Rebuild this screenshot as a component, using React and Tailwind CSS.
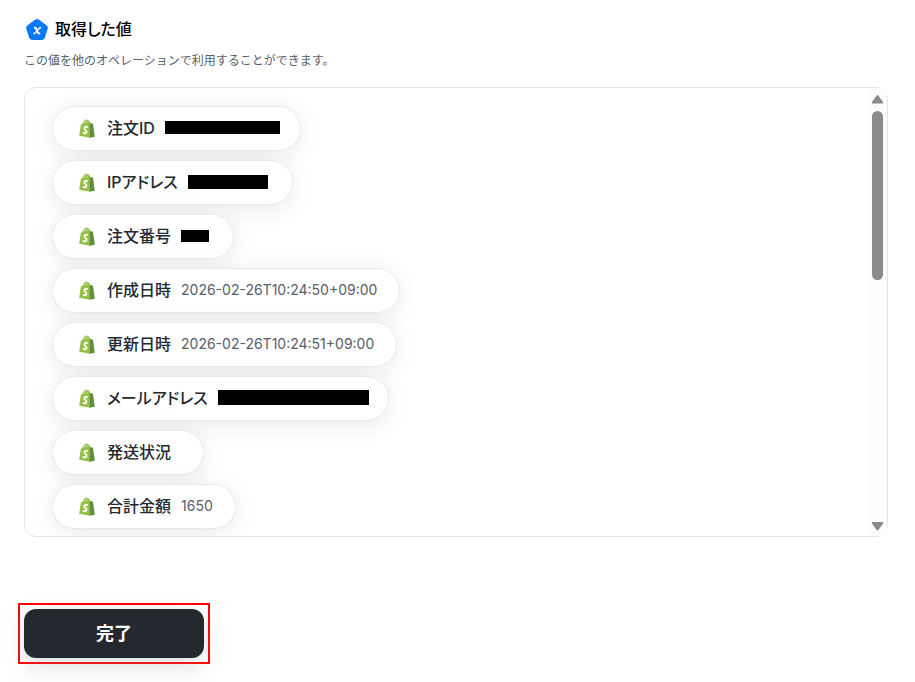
const items = [
  { label: "注文ID", mask: "w-[115px] h-[13px]", box: "w-[113px]" },
  { label: "IPアドレス", mask: "w-20 h-[14px]", box: "w-[82px]" },
  { label: "注文番号", mask: "w-7 h-3", box: "w-[30px]" },
  { label: "作成日時", value: "2026-02-26T10:24:50+09:00" },
  { label: "更新日時", value: "2026-02-26T10:24:51+09:00" },
  { label: "メールアドレス", mask: "w-[151px] h-[15px]", box: "w-[148px]" },
  { label: "発送状況", value: "" },
  { label: "合計金額", value: "1650" },
];

function VariableIcon() {
  return (
    <svg width="24" height="24" viewBox="0 0 24 24" aria-hidden="true">
      <path
        d="M10.2 1.6a3 3 0 0 1 3.6 0l7.9 5.9a3 3 0 0 1 1 3.3l-2.9 9a3 3 0 0 1-2.8 2.1H7a3 3 0 0 1-2.8-2.1l-2.9-9a3 3 0 0 1 1-3.300z"
        fill="#0a78f5"
      />
      <path
        d="M9 9.800h1.200c.4 0 .6.1.8.5l2 4.600c.2.400.4.600.8.600h1.400"
        fill="none"
        stroke="#fff"
        strokeWidth="2"
      />
      <path
        d="M16 9.700h-.6c-.5 0-.8.200-1.100.500l-4.200 4.800c-.3.300-.6.500-1.100.5h-.7"
        fill="none"
        stroke="#fff"
        strokeWidth="1.500"
      />
    </svg>
  );
}

function ShopifyIcon() {
  return (
    <svg width="16" height="19" viewBox="0 0 16 19" className="shrink-0" aria-hidden="true">
      <path
        d="M3.600 5.400C4.100 3 5.700 1 7.300.9c1.300 0 1.900 1.600 1.900 3.500M6.100 4.700c.4-2 1.700-3.400 2.800-3.400.9 0 1.500 1.100 1.700 2.700"
        fill="#b9d68a"
        stroke="#95bf47"
        strokeWidth="0.8"
      />
      <path d="M1.900 5.500 10.800 3.200v15.600L.2 16.800z" fill="#95bf47" />
      <path d="M10.600 3.200l1.500 1.200 1.600.2c.2 0 .3.200.3.300l1.800 12.800-5.200 1.100z" fill="#5e8e3e" />
      <path
        d="M8.800 8.200c-1.600-.8-3.400-.5-3.500.9-.1 1.600 2.500 2 2.300 3.800-.2 1.700-2.200 1.800-3.700.7"
        fill="none"
        stroke="#fff"
        strokeWidth="1.800"
      />
    </svg>
  );
}

function Chip({ item }) {
  return (
    <li className="flex h-[45px] items-center rounded-full border border-[#e8eaf0] bg-white pr-[22px] pl-[26px] shadow-[0_4px_24px_rgba(0,0,0,0.09)]">
      <ShopifyIcon />
      <span className="ml-3 pb-0.5 text-base font-medium text-[#24292f] [font-feature-settings:'palt']">
        {item.label}
      </span>
      {item.mask ? (
        <span className={`ml-2.5 flex pb-0.5 ${item.box}`}>
          <span className={`shrink-0 bg-black ${item.mask}`} />
        </span>
      ) : (
        <span className="ml-2.5 pb-0.5 text-sm text-[#57606a]">{item.value}</span>
      )}
    </li>
  );
}

function Scrollbar() {
  return (
    <div className="flex w-[19px] shrink-0 flex-col items-center bg-[#fcfcfc] py-1" aria-hidden="true">
      <svg width="13" height="13" viewBox="0 0 13 13">
        <path d="M6.500 4 11.300 10.500h-9.600z" fill="#8b8b8b" stroke="#8b8b8b" strokeWidth="2" strokeLinejoin="round" />
      </svg>
      <div className="mt-1.5 h-[169px] w-[11px] rounded-full bg-[#8b8b8b]" />
      <svg width="13" height="13" viewBox="0 0 13 13" className="mt-auto">
        <path d="M6.500 10.500 11.300 4h-9.600z" fill="#8b8b8b" stroke="#8b8b8b" strokeWidth="2" strokeLinejoin="round" />
      </svg>
    </div>
  );
}

export default function App() {
  return (
    <main className="min-h-screen bg-white pt-[18px] pr-[27px] pl-6 font-['Inter','Noto_Sans_CJK_JP',sans-serif]">
      {/* Heading */}
      <header>
        <div className="flex h-6 items-center gap-1.5 pl-px">
          <VariableIcon />
          <h1 className="pb-0.5 text-base font-medium text-black [font-feature-settings:'palt']">
            取得した値
          </h1>
        </div>
        <p className="mt-[9px] text-xs leading-5 text-[#57606a]">
          この値を他のオペレーションで利用することができます。
        </p>
      </header>

      {/* Values */}
      <section className="mt-4 flex h-[450px] rounded-xl border border-[#e4e4e4]">
        <div className="min-w-0 flex-1 overflow-hidden rounded-l-xl">
          <ul className="flex flex-col items-start gap-[9px] pt-[18px] pl-[27px]">
            {items.map((item) => (
              <Chip key={item.label} item={item} />
            ))}
          </ul>
        </div>
        <Scrollbar />
      </section>

      {/* Submit, with its highlight frame */}
      <div className="mt-[66px] -ml-1.5 w-fit border-2 border-[#ff0000] p-1">
        <button
          type="button"
          className="block h-[49px] w-[180px] rounded-xl bg-[#24292f] text-lg font-bold text-white shadow-[0_8px_24px_rgba(140,149,159,0.3)]"
        >
          完了
        </button>
      </div>
    </main>
  );
}
